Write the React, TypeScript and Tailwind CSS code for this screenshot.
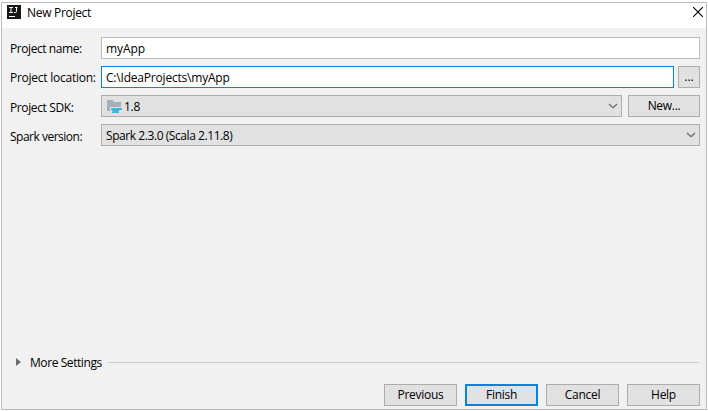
import type { ReactNode } from "react";

function Label({ children, className = "" }: { children: ReactNode; className?: string }) {
  return <label className={`w-[91px] shrink-0 whitespace-nowrap ${className}`}>{children}</label>;
}

function Chevron() {
  return (
    <svg width="10" height="6" viewBox="0 0 10 6" fill="none" stroke="#686868" strokeWidth="1.2" className="mr-[3px]">
      <path d="M1 1L5 4.7L9 1" />
    </svg>
  );
}

function Button({ children, className = "" }: { children: ReactNode; className?: string }) {
  return (
    <button className={`flex h-[22px] w-[73px] items-center justify-center bg-[#e1e1e1] ${className}`}>
      {children}
    </button>
  );
}

function SdkIcon() {
  return (
    <svg width="16" height="16" viewBox="0 0 16 16" className="mr-0.5 shrink-0">
      <path d="M1 2h5.5l2 2H15v5H4v4H1z" fill="#a4afb7" />
      <path d="M5 10h11v2h-2.2c-.5.9-1.1 1.4-1.8 1.8h1V15H6v-1.2h1C5.8 13 5 12 5 10z" fill="#40b6e0" />
    </svg>
  );
}

export default function App() {
  return (
    <div className="h-[411px] w-[708px] bg-white pt-0.5 pl-px font-['Open_Sans','Noto_Sans',sans-serif] text-[12px] leading-4 text-black">
      <div className="flex h-[408px] w-[706px] flex-col border border-[#bcbcbc] bg-[#f1f1f1]">
        <header className="flex h-[25px] shrink-0 items-start bg-white pr-[3px] pl-[5px]">
          <svg width="14" height="14" viewBox="0 0 14 14" className="mt-0.5">
            <rect width="14" height="14" fill="#181818" />
            <path d="M2 2.5h4M4 2.5v5M2 7.5h4M8 2.5h2.5M9.5 2.5v4q0 1-1 1H7M2 11.5h6" fill="none" stroke="#fff" strokeWidth="1" />
          </svg>
          <h1 className="mt-0.5 ml-1.5 tracking-[-0.3px]">New Project</h1>
          <svg width="10" height="10" viewBox="0 0 10 10" className="mt-1 ml-auto" stroke="#000" strokeWidth="1.1">
            <path d="M0 0L10 10M10 0L0 10" />
          </svg>
        </header>
        <main className="flex min-h-0 flex-1 flex-col gap-[7px] pt-[9px] pr-1.5 pl-2">
          <div className="flex h-[22px] items-center">
            <Label className="pt-0.5 tracking-[-0.43px]">Project name:</Label>
            <div className="flex h-[22px] flex-1 items-center border border-[#bcbcbc] bg-white pt-px pl-1 tracking-[-0.1px]">myApp</div>
          </div>
          <div className="flex h-[22px] items-center">
            <Label className="pt-0.5 tracking-[-0.25px]">Project location:</Label>
            <div className="flex h-[22px] flex-1 items-center border border-[#0c83db] bg-white pt-px pl-1 tracking-[-0.2px]">C:\IdeaProjects\myApp</div>
            <button className="ml-1 flex h-[22px] w-[22px] items-center justify-center border border-[#adadad] bg-[#e1e1e1]">...</button>
          </div>
          <div className="flex h-[22px] items-center">
            <Label className="pt-[3px] tracking-[-0.38px]">Project SDK:</Label>
            <div className="flex h-[22px] flex-1 items-center border border-[#adadad] bg-[#e1e1e1] pl-1">
              <SdkIcon />
              <span className="mr-auto pt-px tracking-[-0.3px]">1.8</span>
              <Chevron />
            </div>
            <button className="ml-1.5 flex h-[22px] w-[72px] items-center justify-center border border-[#adadad] bg-[#e1e1e1] tracking-[-0.3px]">New...</button>
          </div>
          <div className="flex h-[22px] items-center">
            <Label className="pt-[3px] tracking-[-0.5px]">Spark version:</Label>
            <div className="flex h-[22px] flex-1 items-center border border-[#adadad] bg-[#e1e1e1] pl-1">
              <span className="mr-auto pt-0.5 tracking-[-0.43px]">Spark 2.3.0 (Scala 2.11.8)</span>
              <Chevron />
            </div>
          </div>
        </main>
        <section className="flex h-4 shrink-0 items-center pr-[7px] pl-3.5">
          <svg width="6" height="8" viewBox="0 0 6 8" className="mr-2">
            <path d="M0 0L5 4L0 8z" fill="#6e6e6e" />
          </svg>
          <span className="w-[78px] pt-0.5 tracking-[-0.42px]">More Settings</span>
          <div className="h-px flex-1 bg-[#cdcdcd]" />
        </section>
        <footer className="flex h-[39px] shrink-0 items-end justify-end gap-2 pr-1.5 pb-[3px]">
          <Button className="border border-[#adadad] tracking-[-0.3px]">Previous</Button>
          <Button className="border-2 border-[#0c83db] tracking-[-0.3px]">Finish</Button>
          <Button className="border border-[#adadad] tracking-[-0.3px]">Cancel</Button>
          <Button className="border border-[#adadad] tracking-[-0.3px]">Help</Button>
        </footer>
      </div>
    </div>
  );
}
